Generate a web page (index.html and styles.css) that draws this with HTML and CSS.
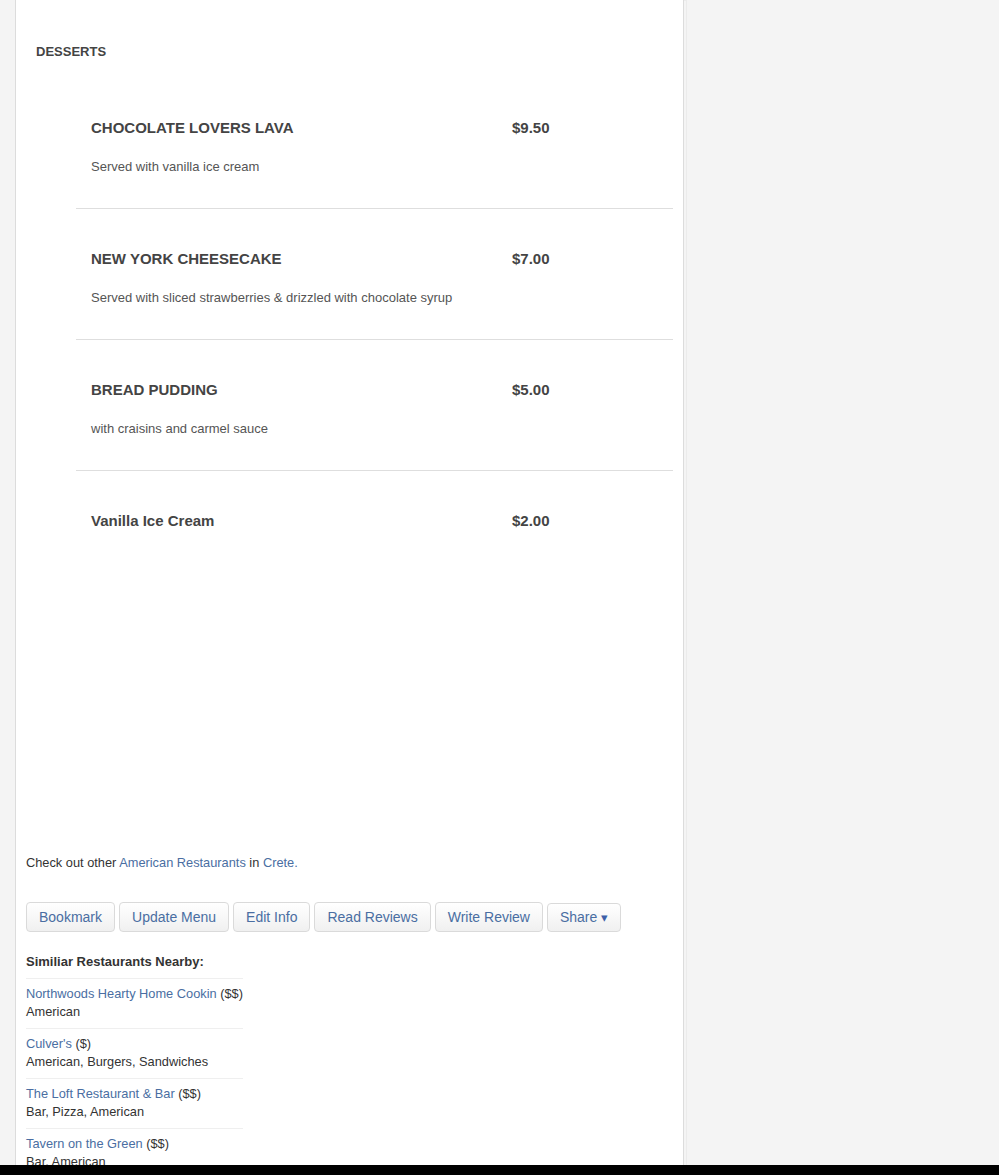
FILE: index.html
```html
<!DOCTYPE html>
<html lang="en">
<head>
<meta charset="utf-8">
<title>Desserts Menu</title>
<link rel="stylesheet" href="styles.css">
</head>
<body>
<div class="page">
  <main class="card">
    <h2 class="section-title">DESSERTS</h2>
    <ul class="menu">
      <li class="item">
        <div class="item-head"><span class="item-name">CHOCOLATE LOVERS LAVA</span><span class="item-price">$9.50</span></div>
        <p class="item-desc">Served with vanilla ice cream</p>
      </li>
      <li class="item">
        <div class="item-head"><span class="item-name">NEW YORK CHEESECAKE</span><span class="item-price">$7.00</span></div>
        <p class="item-desc">Served with sliced strawberries &amp; drizzled with chocolate syrup</p>
      </li>
      <li class="item">
        <div class="item-head"><span class="item-name">BREAD PUDDING</span><span class="item-price">$5.00</span></div>
        <p class="item-desc">with craisins and carmel sauce</p>
      </li>
      <li class="item item-last">
        <div class="item-head"><span class="item-name">Vanilla Ice Cream</span><span class="item-price">$2.00</span></div>
      </li>
    </ul>
    <div class="ad-slot"></div>
    <p class="check-out">Check out other <a href="#">American Restaurants</a> in <a href="#">Crete.</a></p>
    <div class="actions">
      <a class="btn" href="#">Bookmark</a>
      <a class="btn" href="#">Update Menu</a>
      <a class="btn" href="#">Edit Info</a>
      <a class="btn" href="#">Read Reviews</a>
      <a class="btn" href="#">Write Review</a>
      <a class="btn btn-share" href="#">Share <span class="caret">&#9662;</span></a>
    </div>
    <h3 class="nearby-title">Similiar Restaurants Nearby:</h3>
    <ul class="nearby">
      <li><a href="#">Northwoods Hearty Home Cookin</a> ($$)<br>American</li>
      <li><a href="#">Culver's</a> ($)<br>American, Burgers, Sandwiches</li>
      <li><a href="#">The Loft Restaurant &amp; Bar</a> ($$)<br>Bar, Pizza, American</li>
      <li><a href="#">Tavern on the Green</a> ($$)<br>Bar, American</li>
    </ul>
  </main>
</div>
<div class="bottom-bar"></div>
</body>
</html>
```

FILE: styles.css
```css
html, body {
  margin: 0;
  padding: 0;
}
body {
  background: #f4f4f4;
  font-family: "Liberation Sans", Arial, sans-serif;
  color: #333;
  font-size: 13px;
}
a {
  color: #4a6ea2;
  text-decoration: none;
}
.page {
  padding-left: 15px;
}
.card {
  width: 669px;
  box-sizing: border-box;
  background: #fff;
  border-left: 1px solid #dcdcdc;
  border-right: 1px solid #dcdcdc;
  box-shadow: 3px 0 0 -1px #f4f4f4, 3px 0 0 0 #ebebeb;
  padding: 44px 10px 40px 10px;
}
.section-title {
  margin: 0 0 0 10px;
  font-size: 13px;
  line-height: 16px;
  font-weight: bold;
  color: #444;
}
.menu {
  list-style: none;
  margin: 18px 0 0 50px;
  padding: 0;
}
.item {
  padding: 40px 15px 33px 15px;
  border-bottom: 1px solid #dedede;
}
.item-last {
  border-bottom: none;
}
.item-head {
  display: grid;
  grid-template-columns: 421px auto;
  font-size: 15px;
  line-height: 20px;
  font-weight: bold;
  color: #444;
}
.item-desc {
  margin: 21px 0 0 0;
  font-size: 13px;
  line-height: 16px;
  color: #555;
}
.ad-slot {
  height: 290px;
}
.check-out {
  margin: 0;
  font-size: 12.8px;
  line-height: 18px;
  color: #333;
}
.actions {
  display: flex;
  align-items: center;
  gap: 4px;
  margin-top: 30px;
}
.btn {
  display: block;
  font-size: 14px;
  line-height: 18px;
  padding: 5px 12px;
  border: 1px solid #dadada;
  border-radius: 4px;
  background: linear-gradient(#ffffff, #f0f0f0);
  color: #4a6ea2;
}
.btn-share {
  padding: 4px 12px;
}
.caret {
  font-size: 13px;
  color: #3d5fa8;
}
.nearby-title {
  margin: 22px 0 0 0;
  font-size: 13px;
  line-height: 16px;
  font-weight: bold;
  color: #333;
}
.nearby {
  list-style: none;
  margin: 8px 0 0 0;
  padding: 0;
  width: fit-content;
  padding-right: 1px;
  font-size: 12.8px;
}
.nearby li {
  border-top: 1px solid #efefef;
  padding: 6px 0 7px 0;
  line-height: 18px;
  color: #333;
}
.bottom-bar {
  position: fixed;
  left: 0;
  right: 0;
  bottom: 0;
  height: 10px;
  background: #000;
}
```
